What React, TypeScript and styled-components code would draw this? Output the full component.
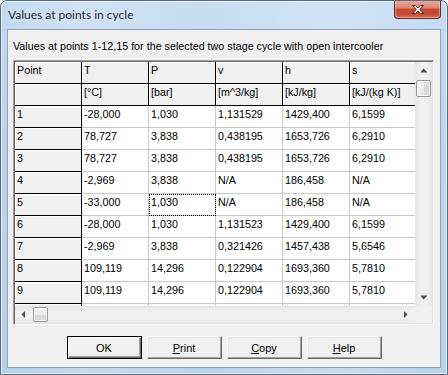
import React from "react";
import styled, { createGlobalStyle, css } from "styled-components";

const GlobalStyle = createGlobalStyle`
  html, body { margin: 0; padding: 0; background: #ffffff; }
  body {
    width: 448px; height: 375px; overflow: hidden;
    font-family: "Liberation Sans", Arial, sans-serif;
  }
`;

const Window = styled.div`
  box-sizing: border-box;
  width: 448px;
  height: 375px;
  display: flex;
  flex-direction: column;
  border: 1px solid #5a6b7f;
  border-radius: 7px 7px 0 0;
  background:
    linear-gradient(90deg, rgba(255,255,255,0) 0%, rgba(255,255,255,0.22) 18%, rgba(255,255,255,0.08) 45%, rgba(255,255,255,0.25) 75%, rgba(255,255,255,0.05) 100%),
    linear-gradient(180deg, #c4daf1 0%, #bbd3ed 35%, #b6cfea 100%);
  box-shadow: inset 0 0 0 1px rgba(255, 255, 255, 0.6);
  overflow: hidden;
`;

const TitleBar = styled.div`
  height: 28px;
  display: flex;
  justify-content: space-between;
  align-items: flex-start;
  padding-left: 7px;
  padding-right: 6px;
`;

const Title = styled.div`
  margin-top: 7px;
  font-family: "Lato", "Noto Sans", sans-serif;
  font-size: 12px;
  line-height: 14px;
  color: #1a2738;
  text-shadow: 0 0 6px rgba(255, 255, 255, 0.9);
`;

const CloseButton = styled.div`
  box-sizing: border-box;
  width: 47px;
  height: 19px;
  margin-top: -1px;
  display: flex;
  align-items: center;
  justify-content: center;
  border: 1px solid #5b2a22;
  border-top: none;
  border-radius: 0 0 4px 4px;
  background: linear-gradient(180deg, #e9ab9e 0%, #dc8573 45%, #c6452f 50%, #c84c36 80%, #d9745f 100%);
  box-shadow: inset 0 0 0 1px rgba(255, 220, 210, 0.45);
`;

const Client = styled.div`
  flex: 1;
  margin: 0 6px 6px 6px;
  border: 1px solid #8fa2b7;
  background: #f0f0f0;
  display: flex;
  flex-direction: column;
  padding: 10px 0 0 5px;
`;

const Caption = styled.div`
  font-size: 10.75px;
  line-height: 13px;
  color: #000;
  white-space: nowrap;
`;

const GridBox = styled.div`
  box-sizing: border-box;
  margin-top: 7px;
  width: 421px;
  height: 265px;
  border: 1px solid;
  border-color: #a0a0a0 #ffffff #ffffff #a0a0a0;
  box-shadow: inset 1px 1px 0 #696969, inset -1px -1px 0 #e3e3e3;
  padding: 1px;
  display: grid;
  grid-template-columns: 400px 17px;
  grid-template-rows: 244px 17px;
  background: #ffffff;
`;

const Cells = styled.div`
  overflow: hidden;
  background: #ffffff;
`;

const Row = styled.div`
  display: flex;
  height: 22px;
`;

const Cell = styled.div<{ $fixed?: boolean; $focus?: boolean }>`
  box-sizing: border-box;
  flex: 0 0 67px;
  width: 67px;
  height: 22px;
  padding: 2px 0 0 2px;
  font-size: 10.75px;
  line-height: 13px;
  color: #000;
  white-space: nowrap;
  overflow: hidden;
  background: #ffffff;
  border-right: 1px solid #c8c8c8;
  border-bottom: 1px solid #c8c8c8;
  ${(p) =>
    p.$fixed &&
    css`
      background: #f0f0f0;
      border-right-color: #000;
      border-bottom-color: #000;
      box-shadow: inset 1px 1px 0 #ffffff;
    `}
  ${(p) =>
    p.$focus &&
    css`
      outline: 1px dotted #000;
      outline-offset: -1px;
    `}
`;

const VScroll = styled.div`
  display: flex;
  flex-direction: column;
  align-items: center;
  background: linear-gradient(90deg, #e6e6e6 0%, #f1f1f1 40%, #f1f1f1 70%, #e8e8e8 100%);
`;

const HScroll = styled.div`
  display: flex;
  align-items: center;
  background: linear-gradient(180deg, #e6e6e6 0%, #f1f1f1 40%, #f1f1f1 70%, #e8e8e8 100%);
`;

const Corner = styled.div`
  background: #f0f0f0;
`;

const Arrow = styled.div`
  width: 17px;
  height: 17px;
  flex: 0 0 17px;
  display: flex;
  align-items: center;
  justify-content: center;
`;

const Spacer = styled.div`
  flex: 1;
`;

const Thumb = styled.div<{ $vertical?: boolean }>`
  box-sizing: border-box;
  border: 1px solid #979797;
  border-radius: 2px;
  ${(p) =>
    p.$vertical
      ? css`
          width: 15px;
          height: 17px;
          margin-top: 1px;
          background: linear-gradient(90deg, #f4f4f4 0%, #ececec 50%, #dcdcdc 51%, #d6d6d6 100%);
        `
      : css`
          width: 15px;
          height: 15px;
          margin-left: 1px;
          background: linear-gradient(180deg, #f4f4f4 0%, #ececec 50%, #dcdcdc 51%, #d6d6d6 100%);
        `}
  box-shadow: inset 0 0 0 1px rgba(255, 255, 255, 0.7);
`;

const ButtonRow = styled.div`
  display: flex;
  justify-content: center;
  gap: 5px;
  margin-top: 11px;
  margin-left: -5px;
`;

const Button = styled.div<{ $default?: boolean }>`
  box-sizing: border-box;
  width: 75px;
  height: 23px;
  display: flex;
  align-items: center;
  justify-content: center;
  font-size: 11px;
  color: #000;
  background: #f0f0f0;
  border: 1px solid;
  border-color: #ffffff #696969 #696969 #ffffff;
  box-shadow: inset -1px -1px 0 #a0a0a0, inset 1px 1px 0 #e3e3e3;
  ${(p) =>
    p.$default &&
    css`
      border-color: #000;
      box-shadow: inset 1px 1px 0 #ffffff, inset -1px -1px 0 #696969, inset -2px -2px 0 #a0a0a0;
    `}
`;

const U = styled.span`
  text-decoration: underline;
`;

const Tri = ({ dir }: { dir: "up" | "down" | "left" | "right" }) => {
  const pts = {
    up: "0.5,4.5 3.5,0.5 7.5,4.5",
    down: "0.5,0.5 7.5,0.5 3.5,4.5",
    left: "4,0 4,7 0.5,3.5",
    right: "0,0 0,7 3.5,3.5",
  }[dir];
  const vert = dir === "up" || dir === "down";
  return (
    <svg width={vert ? 8 : 5} height={vert ? 5 : 8} viewBox={vert ? "0 0 8 5" : "0 0 5 8"}>
      <polygon points={pts} fill="#4a4a4a" />
    </svg>
  );
};

const header = ["Point", "T", "P", "v", "h", "s"];
const units = ["", "[°C]", "[bar]", "[m^3/kg]", "[kJ/kg]", "[kJ/(kg K)]"];
const rows: string[][] = [
  ["1", "-28,000", "1,030", "1,131529", "1429,400", "6,1599"],
  ["2", "78,727", "3,838", "0,438195", "1653,726", "6,2910"],
  ["3", "78,727", "3,838", "0,438195", "1653,726", "6,2910"],
  ["4", "-2,969", "3,838", "N/A", "186,458", "N/A"],
  ["5", "-33,000", "1,030", "N/A", "186,458", "N/A"],
  ["6", "-28,000", "1,030", "1,131523", "1429,400", "6,1599"],
  ["7", "-2,969", "3,838", "0,321426", "1457,438", "5,6546"],
  ["8", "109,119", "14,296", "0,122904", "1693,360", "5,7810"],
  ["9", "109,119", "14,296", "0,122904", "1693,360", "5,7810"],
  ["", "", "", "", "", ""],
];

export default function App() {
  return (
    <>
      <GlobalStyle />
      <Window>
        <TitleBar>
          <Title>Values at points in cycle</Title>
          <CloseButton>
            <svg width="14" height="11" viewBox="0 0 14 11">
              <path
                d="M1.5 1.5 L4.5 1.5 L7 4 L9.5 1.5 L12.5 1.5 L8.8 5.5 L12.5 9.5 L9.5 9.5 L7 7 L4.5 9.5 L1.5 9.5 L5.2 5.5 Z"
                fill="#ffffff"
                stroke="#4a1d16"
                strokeWidth="1"
                strokeLinejoin="round"
              />
            </svg>
          </CloseButton>
        </TitleBar>
        <Client>
          <Caption>Values at points 1-12,15 for the selected two stage cycle with open intercooler</Caption>
          <GridBox>
            <Cells>
              <Row>
                {header.map((h, i) => (
                  <Cell key={i} $fixed>
                    {h}
                  </Cell>
                ))}
              </Row>
              <Row>
                {units.map((u, i) => (
                  <Cell key={i} $fixed>
                    {u}
                  </Cell>
                ))}
              </Row>
              {rows.map((r, ri) => (
                <Row key={ri}>
                  {r.map((v, ci) => (
                    <Cell key={ci} $fixed={ci === 0} $focus={ri === 4 && ci === 2}>
                      {v}
                    </Cell>
                  ))}
                </Row>
              ))}
            </Cells>
            <VScroll>
              <Arrow>
                <Tri dir="up" />
              </Arrow>
              <Thumb $vertical />
              <Spacer />
              <Arrow>
                <Tri dir="down" />
              </Arrow>
            </VScroll>
            <HScroll>
              <Arrow>
                <Tri dir="left" />
              </Arrow>
              <Thumb />
              <Spacer />
              <Arrow>
                <Tri dir="right" />
              </Arrow>
            </HScroll>
            <Corner />
          </GridBox>
          <ButtonRow>
            <Button $default>OK</Button>
            <Button>
              <span>
                <U>P</U>rint
              </span>
            </Button>
            <Button>
              <span>
                <U>C</U>opy
              </span>
            </Button>
            <Button>
              <span>
                <U>H</U>elp
              </span>
            </Button>
          </ButtonRow>
        </Client>
      </Window>
    </>
  );
}
